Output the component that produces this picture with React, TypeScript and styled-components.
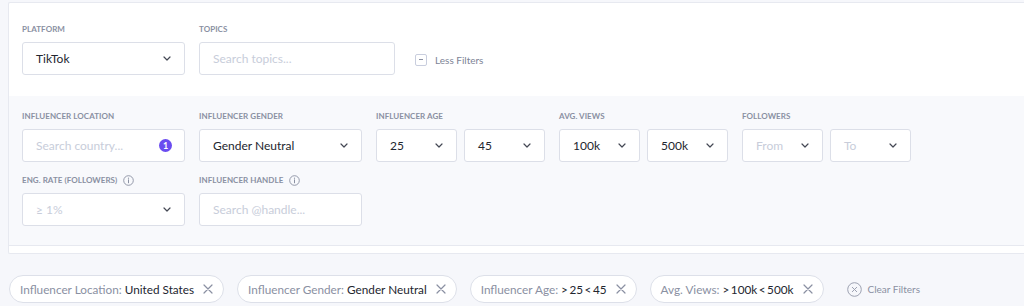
import React from "react";
import styled, { createGlobalStyle } from "styled-components";

const GlobalStyle = createGlobalStyle`
  html, body {
    margin: 0;
    padding: 0;
    background: #f6f7fb;
    font-family: "Lato", "Noto Sans", sans-serif;
    overflow: hidden;
  }
`;

const Page = styled("div")`
  width: 1024px;
  height: 306px;
  padding: 2px 0 0 8px;
  box-sizing: border-box;
`;

const Card = styled("div")`
  background: #ffffff;
  border: 1px solid #e7e9f0;
  border-right: none;
  border-radius: 2px 0 0 2px;
  padding-bottom: 7px;
`;

const TopSection = styled("div")`
  display: flex;
  align-items: flex-end;
  gap: 14px;
  padding: 20px 0 21px 13px;
`;

const FilterSection = styled("div")`
  background: #f8f9fc;
  border-bottom: 1px solid #e7e9f0;
  padding: 14px 0 19px 13px;
  display: flex;
  flex-direction: column;
  gap: 12px;
`;

const Row = styled("div")`
  display: flex;
  gap: 14px;
`;

const Field = styled("div")`
  display: flex;
  flex-direction: column;
`;

const Label = styled("div")`
  height: 12px;
  line-height: 12px;
  margin-bottom: 7px;
  font-size: 8px;
  font-weight: 700;
  letter-spacing: 0.05px;
  text-transform: uppercase;
  color: #8a90a2;
  display: flex;
  align-items: center;
  gap: 6px;
`;

const Pair = styled("div")`
  display: flex;
  gap: 7px;
`;

const Box = styled("div")<{ $w: number; $muted?: boolean }>`
  width: ${(p) => p.$w}px;
  height: 33px;
  box-sizing: border-box;
  background: #ffffff;
  border: 1px solid #dcdfe8;
  border-radius: 3px;
  display: flex;
  align-items: center;
  justify-content: space-between;
  padding: 0 13px 0 13px;
  font-size: 12px;
  color: ${(p) => (p.$muted ? "#c8cdda" : "#23262f")};
`;

const Badge = styled("span")`
  width: 13px;
  height: 13px;
  border-radius: 50%;
  background: #6a4cf0;
  color: #ffffff;
  font-size: 9px;
  font-weight: 700;
  display: flex;
  align-items: center;
  justify-content: center;
  margin-right: -1px;
`;

const LessFilters = styled("div")`
  display: flex;
  align-items: center;
  gap: 8px;
  height: 33px;
  margin-left: 6px;
  margin-bottom: -1px;
  font-size: 10px;
  color: #7d8396;
`;

const MinusBox = styled("span")`
  width: 12px;
  height: 12px;
  box-sizing: border-box;
  border: 1px solid #c9cede;
  border-radius: 2px;
  display: flex;
  align-items: center;
  justify-content: center;
  &::after {
    content: "";
    width: 4px;
    height: 1px;
    background: #8a90a2;
  }
`;

const ChipRow = styled("div")`
  display: flex;
  align-items: center;
  gap: 13px;
  margin-top: 21px;
  padding-left: 1px;
`;

const Chip = styled("div")`
  height: 28px;
  box-sizing: border-box;
  border: 1px solid #dde0e9;
  border-radius: 14px;
  background: #ffffff;
  display: flex;
  align-items: center;
  gap: 9px;
  padding: 0 10px 0 10px;
  font-size: 11.75px;
  color: #8a90a2;
  white-space: nowrap;
`;

const ChipValue = styled("span")<{ $tight?: boolean }>`
  color: #23262f;
  word-spacing: ${(p) => (p.$tight ? "-1.5px" : "0")};
`;

const ClearFilters = styled("div")`
  display: flex;
  align-items: center;
  gap: 6px;
  margin-left: 10px;
  font-size: 10px;
  color: #8a90a2;
`;

const Chevron = () => (
  <svg width="8" height="5" viewBox="0 0 8 5" fill="none">
    <path d="M1 1l3 3 3-3" stroke="#444854" strokeWidth="1.2" strokeLinecap="round" strokeLinejoin="round" />
  </svg>
);

const Info = () => (
  <svg width="11" height="11" viewBox="0 0 11 11" fill="none">
    <circle cx="5.5" cy="5.5" r="4.8" stroke="#8a90a2" strokeWidth="0.9" />
    <path d="M5.5 4.8v3" stroke="#8a90a2" strokeWidth="1" strokeLinecap="round" />
    <circle cx="5.5" cy="3.2" r="0.6" fill="#8a90a2" />
  </svg>
);

const Close = () => (
  <svg width="10" height="10" viewBox="0 0 10 10" fill="none">
    <path d="M1 1l8 8M9 1l-8 8" stroke="#8a90a2" strokeWidth="1.2" strokeLinecap="round" />
  </svg>
);

const ClearIcon = () => (
  <svg width="15" height="15" viewBox="0 0 15 15" fill="none">
    <circle cx="7.5" cy="7.5" r="6.8" stroke="#9ca1b1" strokeWidth="1" />
    <path d="M5.3 5.3l4.4 4.4M9.7 5.3l-4.4 4.4" stroke="#9ca1b1" strokeWidth="1" strokeLinecap="round" />
  </svg>
);

const Select = ({ w, value, muted }: { w: number; value: string; muted?: boolean }) => (
  <Box $w={w} $muted={muted}>
    <span>{value}</span>
    <Chevron />
  </Box>
);

const chips = [
  { k: "Influencer Location:", v: "United States" },
  { k: "Influencer Gender:", v: "Gender Neutral" },
  { k: "Influencer Age:", v: "> 25 < 45", range: true },
  { k: "Avg. Views:", v: "> 100k < 500k", range: true },
];

export default function App() {
  return (
    <Page>
      <GlobalStyle />
      <Card>
        <TopSection>
          <Field>
            <Label>Platform</Label>
            <Select w={163} value="TikTok" />
          </Field>
          <Field>
            <Label>Topics</Label>
            <Box $w={196} $muted>
              Search topics...
            </Box>
          </Field>
          <LessFilters>
            <MinusBox />
            Less Filters
          </LessFilters>
        </TopSection>
        <FilterSection>
          <Row>
            <Field>
              <Label>Influencer Location</Label>
              <Box $w={163} $muted>
                <span>Search country...</span>
                <Badge>1</Badge>
              </Box>
            </Field>
            <Field>
              <Label>Influencer Gender</Label>
              <Select w={163} value="Gender Neutral" />
            </Field>
            <Field>
              <Label>Influencer Age</Label>
              <Pair>
                <Select w={81} value="25" />
                <Select w={81} value="45" />
              </Pair>
            </Field>
            <Field>
              <Label>Avg. Views</Label>
              <Pair>
                <Select w={81} value="100k" />
                <Select w={81} value="500k" />
              </Pair>
            </Field>
            <Field>
              <Label>Followers</Label>
              <Pair>
                <Select w={81} value="From" muted />
                <Select w={81} value="To" muted />
              </Pair>
            </Field>
          </Row>
          <Row>
            <Field>
              <Label>
                Eng. Rate (Followers) <Info />
              </Label>
              <Select w={163} value="≥ 1%" muted />
            </Field>
            <Field>
              <Label>
                Influencer Handle <Info />
              </Label>
              <Box $w={163} $muted>
                Search @handle...
              </Box>
            </Field>
          </Row>
        </FilterSection>
      </Card>
      <ChipRow>
        {chips.map((c) => (
          <Chip key={c.k}>
            <span>
              {c.k} <ChipValue $tight={c.range}>{c.v}</ChipValue>
            </span>
            <Close />
          </Chip>
        ))}
        <ClearFilters>
          <ClearIcon />
          Clear Filters
        </ClearFilters>
      </ChipRow>
    </Page>
  );
}
